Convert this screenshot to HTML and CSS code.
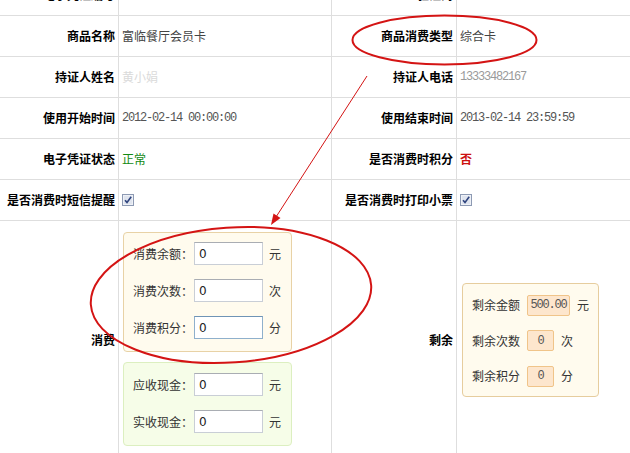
FILE: index.html
```html
<!DOCTYPE html>
<html lang="zh-CN">
<head>
<meta charset="utf-8">
<title>电子凭证详情</title>
<link rel="stylesheet" href="styles.css">
</head>
<body>
<div class="sheet">
  <div class="cell lbl">电子凭证编号</div>
  <div class="cell val"></div>
  <div class="cell lbl">验证码</div>
  <div class="cell val last"></div>

  <div class="cell lbl">商品名称</div>
  <div class="cell val">富临餐厅会员卡</div>
  <div class="cell lbl">商品消费类型</div>
  <div class="cell val last">综合卡</div>

  <div class="cell lbl">持证人姓名</div>
  <div class="cell val"><span class="masked">黄小娟</span></div>
  <div class="cell lbl">持证人电话</div>
  <div class="cell val last"><span class="mono phone">13333482167</span></div>

  <div class="cell lbl">使用开始时间</div>
  <div class="cell val"><span class="mono">2012-02-14 00:00:00</span></div>
  <div class="cell lbl">使用结束时间</div>
  <div class="cell val last"><span class="mono">2013-02-14 23:59:59</span></div>

  <div class="cell lbl">电子凭证状态</div>
  <div class="cell val"><span class="ok">正常</span></div>
  <div class="cell lbl">是否消费时积分</div>
  <div class="cell val last"><span class="no">否</span></div>

  <div class="cell lbl">是否消费时短信提醒</div>
  <div class="cell val"><span class="chk"><svg width="12" height="12" viewBox="0 0 12 12"><rect x="0.5" y="0.5" width="11" height="11" fill="#dfe4ee" stroke="#8d9ab3"/><rect x="1.5" y="1.5" width="9" height="9" fill="none" stroke="#eef1f7"/><path d="M3 6.2 L5 8.4 L9.2 2.8" fill="none" stroke="#2f447e" stroke-width="1.6"/></svg></span></div>
  <div class="cell lbl">是否消费时打印小票</div>
  <div class="cell val last"><span class="chk"><svg width="12" height="12" viewBox="0 0 12 12"><rect x="0.5" y="0.5" width="11" height="11" fill="#dfe4ee" stroke="#8d9ab3"/><rect x="1.5" y="1.5" width="9" height="9" fill="none" stroke="#eef1f7"/><path d="M3 6.2 L5 8.4 L9.2 2.8" fill="none" stroke="#2f447e" stroke-width="1.6"/></svg></span></div>

  <div class="cell lbl">消费</div>
  <div class="cell val stack">
    <div class="panel consume">
      <div class="line"><span class="plabel">消费余额：</span><input class="field" value="0" readonly><span class="unit">元</span></div>
      <div class="line"><span class="plabel">消费次数：</span><input class="field" value="0" readonly><span class="unit">次</span></div>
      <div class="line"><span class="plabel">消费积分：</span><input class="field focus" value="0" readonly><span class="unit">分</span></div>
    </div>
    <div class="panel cash">
      <div class="line"><span class="plabel">应收现金：</span><input class="field" value="0" readonly><span class="unit">元</span></div>
      <div class="line"><span class="plabel">实收现金：</span><input class="field" value="0" readonly><span class="unit">元</span></div>
    </div>
  </div>
  <div class="cell lbl">剩余</div>
  <div class="cell val last rest-cell">
    <div class="panel rest">
      <div class="rline"><span class="rlabel">剩余金额</span><span class="badge wide">500.00</span><span class="unit">元</span></div>
      <div class="rline"><span class="rlabel">剩余次数</span><span class="badge">0</span><span class="unit">次</span></div>
      <div class="rline"><span class="rlabel">剩余积分</span><span class="badge">0</span><span class="unit">分</span></div>
    </div>
  </div>
</div>

<svg class="marks" width="630" height="453" viewBox="0 0 630 453">
  <ellipse cx="444.5" cy="40" rx="92" ry="24.5" fill="none" stroke="#d41414" stroke-width="2"/>
  <line x1="367" y1="76" x2="276" y2="217" stroke="#d41414" stroke-width="1"/>
  <polygon points="271,225 280.5,218 273.5,213.5" fill="#d41414"/>
  <ellipse cx="231" cy="295" rx="140.5" ry="67.5" fill="none" stroke="#d41414" stroke-width="2" transform="rotate(-4 231 295)"/>
</svg>
</body>
</html>
```

FILE: styles.css
```css
html, body {
  margin: 0;
  padding: 0;
  background: #ffffff;
}

body {
  font-family: "Noto Sans CJK SC", "Liberation Sans", sans-serif;
  font-size: 12px;
  color: #333;
  overflow: hidden;
  width: 630px;
  height: 453px;
}

.sheet {
  display: grid;
  grid-template-columns: 119px 213px 125px 1fr;
  grid-template-rows: repeat(6, 41px) 238px;
  margin-top: -25px;
  width: 630px;
}

.cell {
  box-sizing: border-box;
  border-bottom: 1px solid #dedede;
  border-right: 1px solid #dedede;
  display: flex;
  align-items: center;
  line-height: 14px;
  white-space: nowrap;
}

.cell.last {
  border-right: none;
}

.lbl {
  justify-content: flex-end;
  padding-right: 3px;
  font-weight: bold;
  color: #000;
}

.val {
  padding-left: 3px;
  color: #444;
}

.mono {
  font-family: "Liberation Mono", monospace;
  font-size: 12px;
  letter-spacing: -1.2px;
  color: #555;
}

.masked {
  color: #dadada;
}

.phone {
  color: #9a9a9a;
}

.ok {
  color: #138a13;
}

.no {
  color: #cc1010;
  font-weight: bold;
}

.chk {
  display: inline-flex;
  width: 12px;
  height: 12px;
}

.stack {
  flex-direction: column;
  align-items: flex-start;
  justify-content: flex-start;
  padding: 11px 0 0 4px;
  gap: 10px;
}

.panel {
  box-sizing: border-box;
  border: 1px solid #e8d2a6;
  border-radius: 4px;
  background: #fffbee;
}

.consume {
  width: 169px;
  height: 120px;
  padding: 2px 0 0 9px;
}

.cash {
  width: 169px;
  height: 84px;
  padding: 3px 0 0 9px;
  background: #f6fde8;
  border-color: #dcefc0;
}

.line {
  height: 37px;
  display: flex;
  align-items: center;
}

.plabel {
  width: 61px;
  color: #333;
}

.field {
  box-sizing: border-box;
  width: 69px;
  height: 23px;
  margin: 0;
  padding: 0 4px;
  border: 1px solid #c9ced6;
  border-top-color: #a9adb3;
  background: #fff;
  font-family: "DejaVu Sans", sans-serif;
  font-size: 12px;
  color: #222;
  outline: none;
}

.field.focus {
  border-color: #8fb0cc;
  border-top-color: #6f94b6;
}

.unit {
  margin-left: 6px;
  color: #333;
}

.rest-cell {
  align-items: center;
  padding-left: 5px;
}

.rest {
  width: 137px;
  height: 114px;
  padding: 4px 0 0 9px;
  border-color: #e6cd9e;
}

.rline {
  height: 35.5px;
  display: flex;
  align-items: center;
}

.rlabel {
  width: 55px;
  color: #333;
}

.badge {
  box-sizing: border-box;
  width: 27px;
  height: 21px;
  border: 1px solid #f0c489;
  border-radius: 2px;
  background: #fde6cd;
  display: inline-flex;
  align-items: center;
  justify-content: center;
  font-family: "Liberation Mono", monospace;
  letter-spacing: -1.2px;
  color: #555;
}

.badge.wide {
  width: 43px;
}

.rline .unit {
  margin-left: 7px;
}

.marks {
  position: absolute;
  left: 0;
  top: 0;
  pointer-events: none;
}
```
